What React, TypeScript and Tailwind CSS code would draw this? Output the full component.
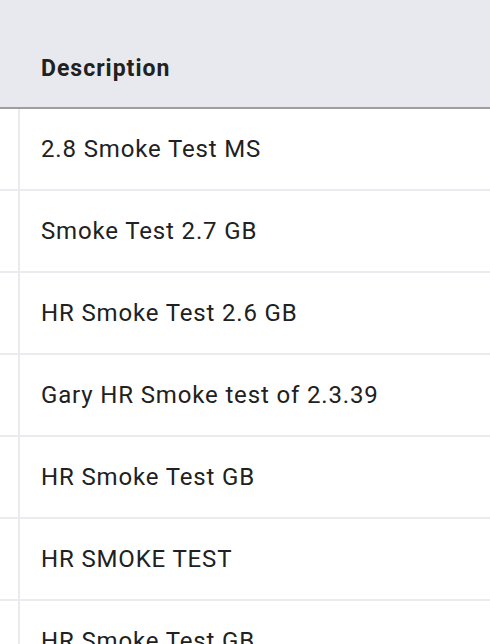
const rows = [
  "2.8 Smoke Test MS",
  "Smoke Test 2.7 GB",
  "HR Smoke Test 2.6 GB",
  "Gary HR Smoke test of 2.3.39",
  "HR Smoke Test GB",
  "HR SMOKE TEST",
  "HR Smoke Test GB",
];

const App = () => {
  return (
    <div className="w-[490px] h-[644px] overflow-hidden bg-white font-['Roboto',sans-serif] text-[#212121]">
      <div className="flex h-[109px] items-end bg-[#e8e9ee] border-b-2 border-[#9e9e9e] pl-[41px] pb-[27px]">
        <span className="text-[23px] font-bold leading-none tracking-[1px]">Description</span>
      </div>
      <div className="flex flex-col">
        {rows.map((row, i) => (
          <div key={i} className="flex h-[82px] border-b-2 border-[#ebebef]">
            <div className="w-[18px] shrink-0" />
            <div className="flex flex-1 items-center border-l-2 border-[#ebebef] pl-[21px]">
              <span className="text-[24px] leading-none whitespace-nowrap tracking-[0.85px]">{row}</span>
            </div>
          </div>
        ))}
      </div>
    </div>
  );
};

export default App;
